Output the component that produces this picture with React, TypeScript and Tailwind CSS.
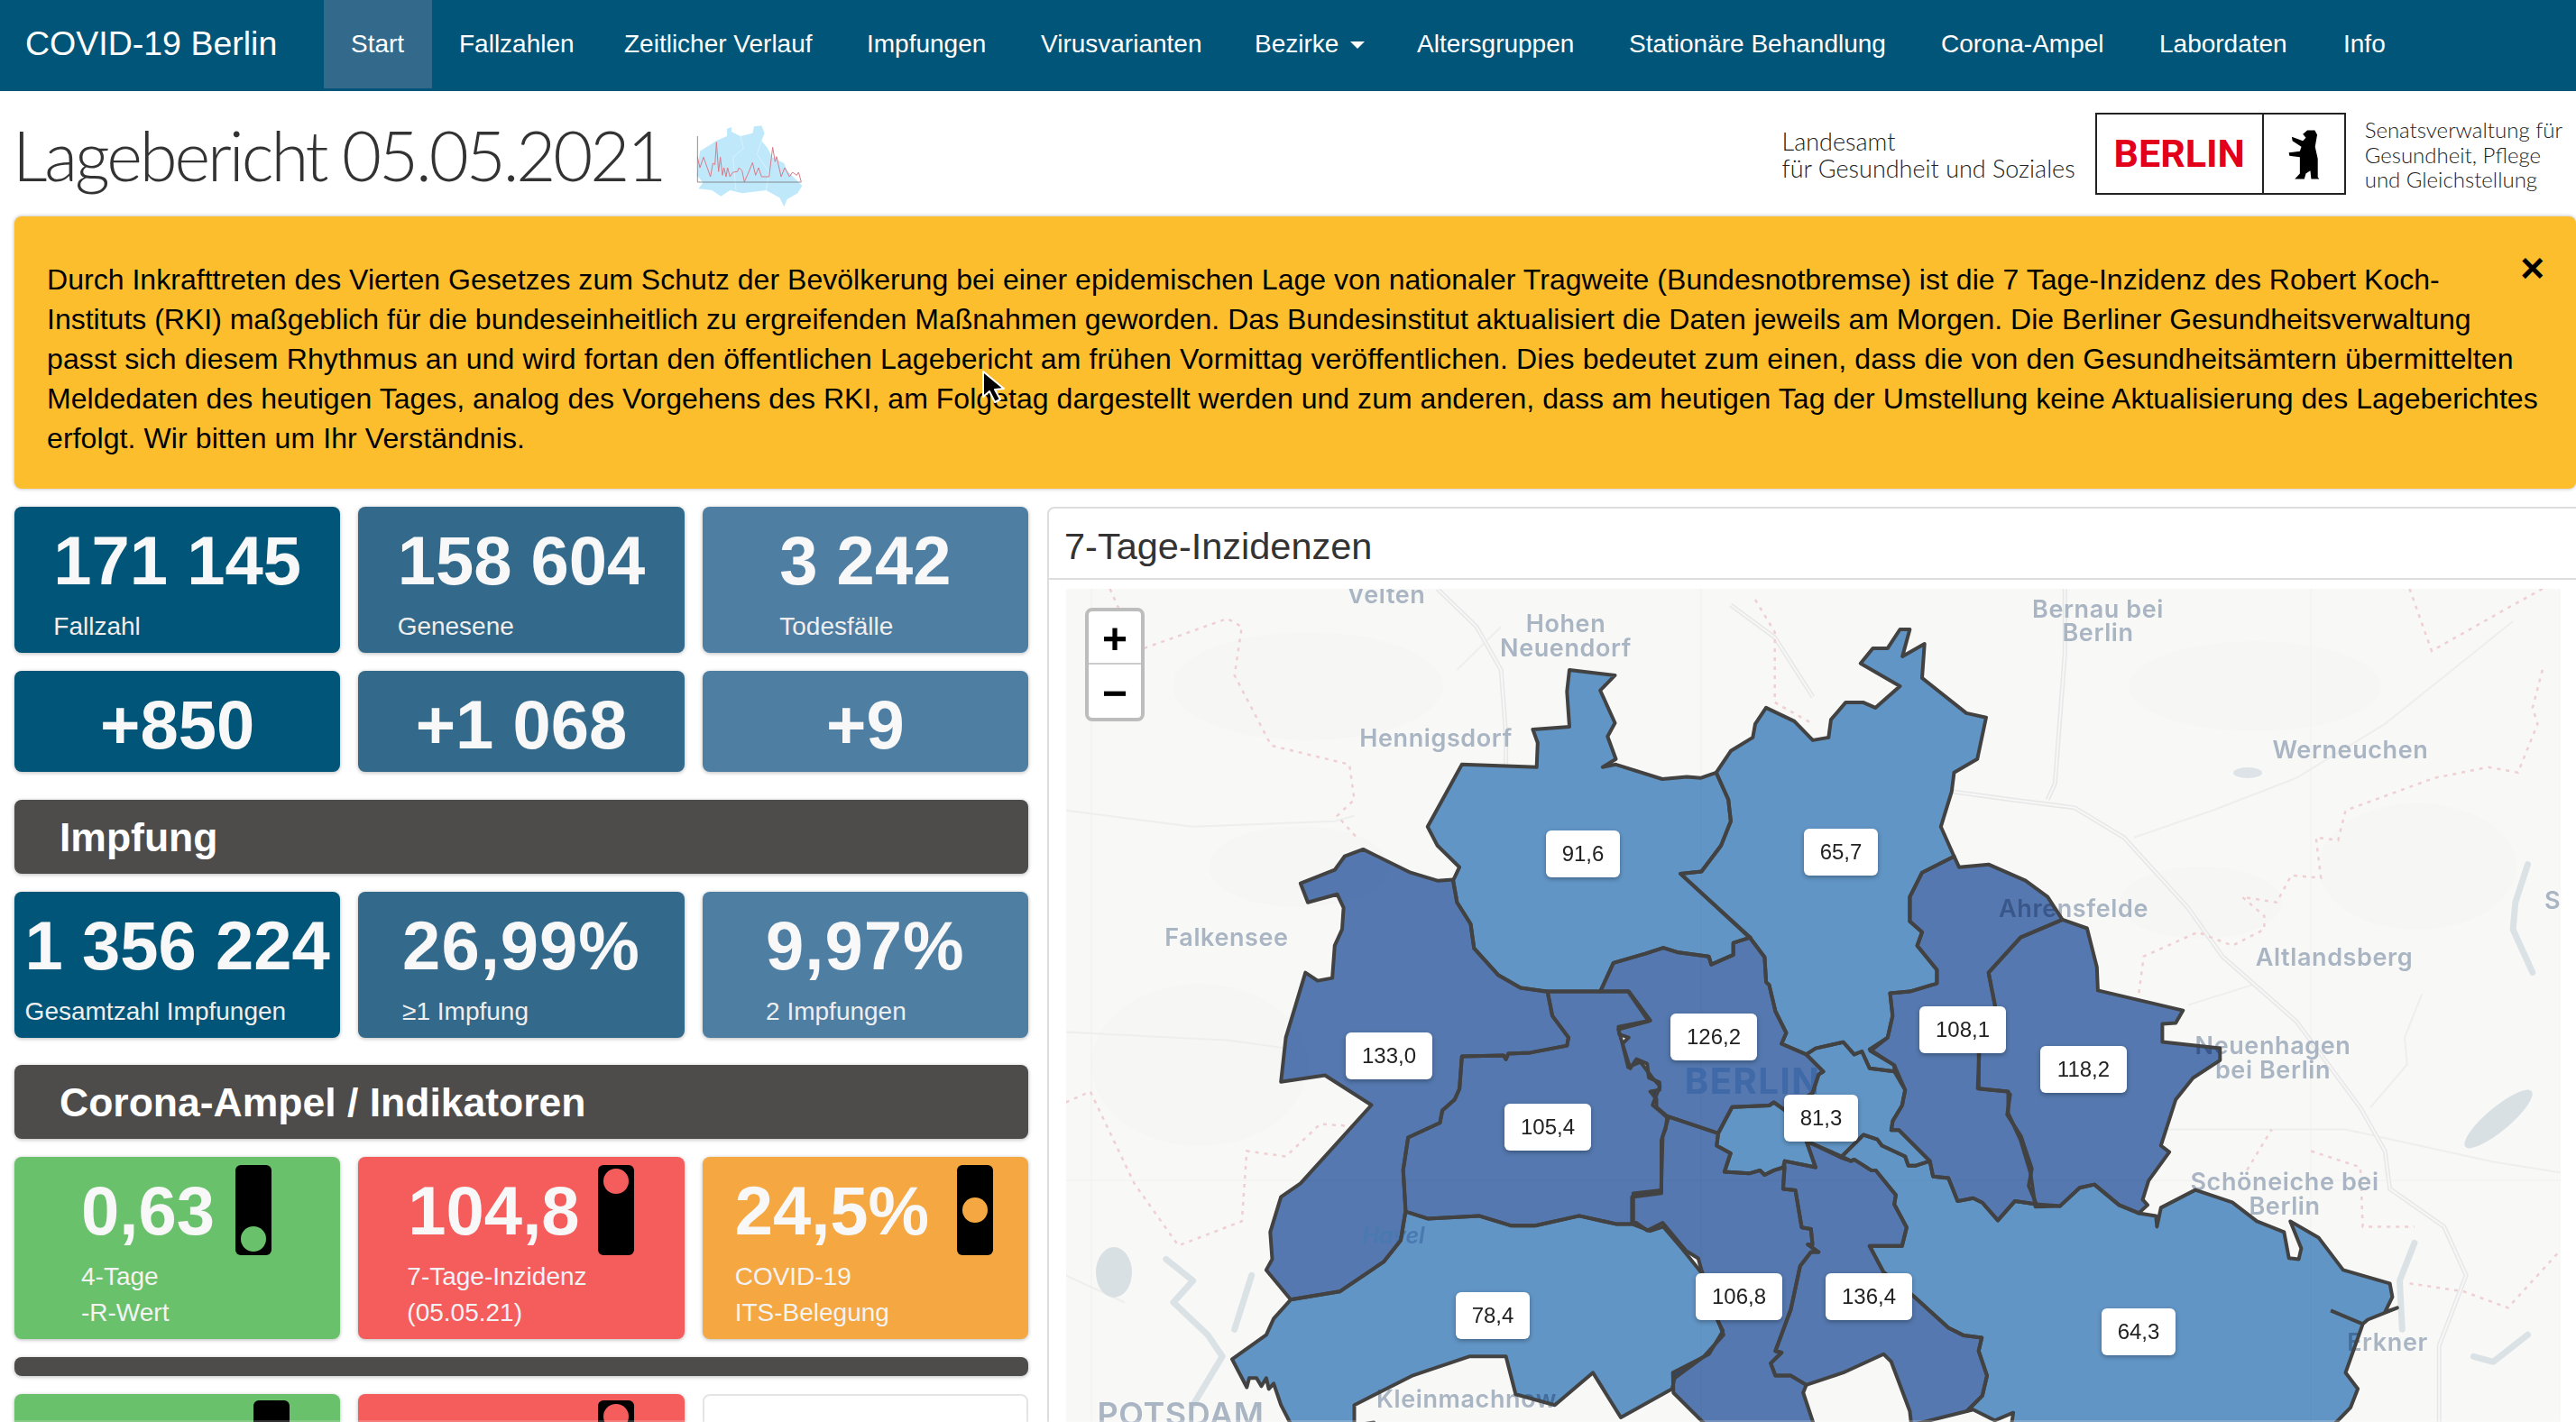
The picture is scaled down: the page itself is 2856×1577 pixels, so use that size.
import React from "react";

const SANS = "font-['Liberation_Sans',Arial,sans-serif]";

const NAV: [string, string][] = [["Start", "w-[120px]"], ["Fallzahlen", "w-[183px]"], ["Zeitlicher Verlauf", "w-[269px]"], ["Impfungen", "w-[193px]"], ["Virusvarianten", "w-[237px]"], ["Bezirke", "w-[180px]"], ["Altersgruppen", "w-[235px]"], ["Stationäre Behandlung", "w-[346px]"], ["Corona-Ampel", "w-[242px]"], ["Labordaten", "w-[204px]"], ["Info", "w-[90px]"]];

const ALERT: [string, string][] = [
  ["Durch Inkrafttreten des Vierten Gesetzes zum Schutz der Bevölkerung bei einer epidemischen Lage von nationaler Tragweite (Bundesnotbremse) ist die 7 Tage-Inzidenz des Robert Koch-", "tracking-[0.03px]"],
  ["Instituts (RKI) maßgeblich für die bundeseinheitlich zu ergreifenden Maßnahmen geworden. Das Bundesinstitut aktualisiert die Daten jeweils am Morgen. Die Berliner Gesundheitsverwaltung", ""],
  ["passt sich diesem Rhythmus an und wird fortan den öffentlichen Lagebericht am frühen Vormittag veröffentlichen. Dies bedeutet zum einen, dass die von den Gesundheitsämtern übermittelten", "tracking-[0.135px]"],
  ["Meldedaten des heutigen Tages, analog des Vorgehens des RKI, am Folgetag dargestellt werden und zum anderen, dass am heutigen Tag der Umstellung keine Aktualisierung des Lageberichtes", "tracking-[0.04px]"],
  ["erfolgt. Wir bitten um Ihr Verständnis.", "tracking-[0.09px]"],
];

type Zone = "a" | "b" | "c";
const ZONES: Record<Zone, [number, number, number, number]> = {
  a: [1160, 640, 0.5421, 0.5995],
  b: [2000, 640, 0.5459, 0.5995],
  c: [1780, 1040, 0.3425, 0.3425],
};
type Seg = [Zone, number[]];
const pts = (segs: Seg[]) =>
  segs
    .flatMap(([z, n]) => {
      const [ox, oy, sx, sy] = ZONES[z];
      const out: string[] = [];
      for (let i = 0; i < n.length; i += 2) out.push(`${(ox + n[i] * sx).toFixed(1)},${(oy + n[i + 1] * sy).toFixed(1)}`);
      return out;
    })
    .join(" ");

const LIGHT = "#6499cc";
const DARK = "#567bb5";

const DISTRICTS: { fill: string; segs: Seg[] }[] = [
  { fill: LIGHT, segs: [["a", [1070,170,1163,180,1133,208,1163,268,1148,293,1165,335,1138,350,1165,345,1260,372,1310,368,1338,370,1370,360,1395,410,1400,450,1380,495,1340,543,1297,547,1440,665,1405,675,1405,697,1360,715,1355,700,1290,692,1262,684,1225,695,1160,712,1133,765,1020,765,970,758,925,735,875,685,868,640,840,600,832,560,845,535,800,495,780,460,850,345,1003,350,1005,305,995,280,1070,275,1065,210]]] },
  { fill: LIGHT, segs: [["a", [1370,360,1400,320,1445,295,1450,270,1472,240,1530,265]], ["b", [18,300,50,295,55,262,85,230,120,230,145,240,195,200,115,158,140,130,170,130,195,95,215,95,200,145,245,122,240,185,330,250,370,258,352,335,305,360,300,395,278,460,305,515,240,545,215,590,215,635,240,655,230,680,270,725,270,750,215,765,175,768,180,810,170,850,135,875]], ["c", [935,410,935,430,855,420,830,365,805,375,770,335,680,355,650,375,570,340,585,305,550,235,530,150,520,140,515,60,470,0]], ["a", [1297,547,1340,543,1380,495,1400,450,1395,410]]] },
  { fill: DARK, segs: [["c", [470,0,515,60,520,140,530,150,550,235,585,305,570,340,650,375,705,430,690,440,670,500,580,555,545,530,530,540,410,545,365,630,200,575,165,545,165,520,145,495,175,490,175,465,140,450,135,405,100,390,80,420,55,340,75,320,45,310,42,285,145,265,75,170]], ["a", [1133,765,1160,712,1225,695,1262,684,1290,692,1355,700,1360,715,1405,697,1405,675,1440,665]]] },
  { fill: DARK, segs: [["a", [648,502,745,545,800,560,832,558,840,600,868,640,875,685,925,735,970,758,1025,765,1035,810,1068,850,1065,865,990,878,945,880,940,890,935,883,850,885,845,945,835,965,810,985,805,1008,740,1035,730,1095,735,1170,725,1225,690,1265,600,1320,500,1335,450,1280,462,1260,458,1210,480,1145,520,1120,665,975,570,920,480,932,490,850,510,790,530,730,555,745,585,740,590,680,605,650,608,610,595,585,535,600,520,565,590,540,610,515]]] },
  { fill: DARK, segs: [["a", [1025,765,1190,765,1232,820,1170,835,1178,860,1190,905,1215,895,1240,925,1255,940,1240,975,1260,990,1272,1000,1258,1040,1258,1138,1198,1145,1198,1195,1165,1195,1090,1180,1000,1198,950,1198,885,1180,780,1185,735,1172,730,1095,740,1035,805,1008,810,985,835,965,845,945,850,885,935,883,940,890,945,880,990,878,1065,865,1068,850,1035,810]]] },
  { fill: DARK, segs: [["c", [200,575,365,630,360,670,405,695,385,755,465,760,500,750,515,765,545,750,580,740,575,810,615,815,635,935,665,940,670,990,655,990,690,1015,665,1015,630,1060,600,1200,550,1335,570,1340,535,1375,550,1415,600,1415,650,1445,640,1470,680,1590,340,1590,220,1470,218,1405,335,1345,380,1270,360,1230,310,1070,300,1035,260,1010,185,920,135,945,100,920,90,920,90,825,180,815,185,640,195,615]]] },
  { fill: LIGHT, segs: [["a", [735,1172,780,1185,885,1180,950,1198,1000,1198,1090,1180,1165,1195,1198,1195,1235,1208,1262,1200,1300,1240,1340,1285,1355,1330,1385,1400,1345,1440,1285,1480,1280,1500,1175,1553,1118,1470,1040,1530,960,1510,940,1440,865,1440,750,1475,630,1530,630,1568,670,1562,680,1600,520,1600,480,1530,465,1490,455,1500,450,1480,440,1495,430,1480,415,1480,410,1497,380,1445,450,1400,465,1370,500,1335,600,1320,690,1265,725,1225]]] },
  { fill: LIGHT, segs: [["c", [650,375,680,355,770,335,805,375,830,365,855,420,935,430,970,490,960,540,930,590,925,620,950,620,1050,720,1005,735,980,735,970,705,895,670,880,650,835,635,765,705,650,655,680,740,580,720,575,740,545,750,515,765,500,750,465,760,385,755,405,695,360,670,365,630,410,545,530,540,545,530,580,555,670,500,690,440,705,430]]] },
  { fill: DARK, segs: [["c", [650,655,765,710,795,720,805,715,860,750,875,750,940,830,935,860,975,935,960,995,855,995,900,1080,1000,1160,1110,1260,1160,1285,1218,1292,1208,1335,1235,1415,1220,1480,1170,1530,990,1575,985,1530,925,1370,900,1345,770,1405,650,1445,600,1415,550,1415,535,1375,570,1340,550,1335,600,1200,630,1060,665,1015,690,1015,655,990,670,990,665,940,635,935,615,815,575,810,580,720,680,740]]] },
  { fill: DARK, segs: [["b", [305,515,315,535,375,530,450,560,495,590,525,632,440,665,375,730,390,800]], ["c", [1210,370,1205,485,1300,495,1310,505,1300,570,1345,640,1380,745,1370,800,1395,860,1325,850,1270,912,1220,855,1190,840,1140,850,1110,775,1060,770,1050,720,950,620,925,620,930,590,960,540,970,490,935,410,855,358]], ["b", [170,850,180,810,175,768,215,765,270,750,270,725,230,680,240,655,215,635,215,590,240,545]]] },
  { fill: DARK, segs: [["b", [525,632,575,648,595,720,597,763,770,800,755,823,728,825,728,858,845,870,845,892,790,925,755,965,725,1050,742,1062,700,1115,688,1150,698,1160,680,1175,640,1160,590,1122,560,1128,520,1162,470,1163,460,1100,440,1040,415,990,415,950,355,945,355,880,390,800,375,730,440,665]]] },
  { fill: LIGHT, segs: [["c", [765,705,835,635,880,650,895,670,970,705,980,735,1005,735,1050,720,1060,770,1110,775,1140,850,1190,840,1220,855,1270,912,1325,850,1395,860]], ["b", [520,1162,560,1128,590,1122,640,1160,680,1175,715,1180,717,1200,725,1165,795,1132,870,1155,920,1190,975,1210,985,1258,1005,1260,1010,1240,988,1190,1045,1220,1095,1280,1190,1305,1195,1330,1180,1358,1205,1350,1145,1372,1135,1380,1100,1470,1125,1500,1110,1535,1040,1600]], ["c", [1310,1600,1320,1535,1260,1560,1190,1525,1170,1530,1220,1480,1235,1415,1208,1335,1218,1292,1160,1285,1110,1260,1000,1160,900,1080,855,995,960,995,975,935,935,860,940,830,875,750,860,750,805,715,795,720]]] },
];

const EXTRA_LINE: Seg[] = [["b", [1070,1355,1135,1380]]];

const ROADS: Seg[][] = [
  [["b", [300,395,420,410,550,425,650,480,780,610,850,700,1000,820,1130,980,1180,1060,1190,1130,1300,1200,1345,1290,1290,1420,1290,1570]]],
  [["a", [800,20,880,90,930,170,940,290,940,350]]],
  [["a", [1400,50,1490,110,1568,220]]],
  [["b", [530,20,530,140,510,380,495,410]]],
];
const MINOR: Seg[][] = [
  [["a", [840,170,930,90]]],
  [["a", [40,430,300,460,590,450,630,440]]],
  [["a", [40,840,370,855,490,870]]],
  [["a", [40,1290,160,1340]]],
  [["b", [670,480,830,430,1000,370,1180,270,1440,80]]],
  [["b", [730,1020,1100,1020,1400,1080,1538,1100]]],
  [["b", [780,790,920,750]]],
  [["b", [1255,770,1220,850,1225,900,1150,980]]],
];
const BORDERS: Seg[][] = [
  [["a", [200,130,370,75,400,90,385,180,460,310,620,345,630,410,595,440,640,485]]],
  [["a", [40,970,90,950,180,1120,270,1235,400,1190,410,1060,490,1070,560,1010,640,1015]]],
  [["a", [130,20,150,60]]],
  [["a", [1450,40,1490,100,1490,230,1568,270]]],
  [["b", [1230,20,1275,135,1440,50,1500,20]]],
  [["b", [1500,170,1480,240,1490,270,1450,360,1390,350,1280,370,1100,430,1085,485,1040,480,1050,555,990,550,960,600,890,590,935,625,935,650,870,680,800,655,690,700,680,770]]],
  [["b", [900,1095,950,1020]]],
  [["b", [1030,1060,1130,1090,1135,1200,1240,1200]]],
  [["b", [1230,1305,1340,1320,1430,1350,1530,1250]]],
];
const WATER: Seg[][] = [
  [["a", [245,1260,300,1300,260,1340,330,1400,360,1440,300,1530]]],
  [["a", [420,1290,385,1390]]],
  [["b", [1470,530,1445,600,1440,650,1480,730]]],
  [["b", [1240,1230,1210,1300,1215,1390]]],
  [["b", [1360,1440,1400,1450,1470,1400]]],
];

const PLACES: [string, number, number, number?][] = [
  ["Velten", 1537, 668], ["Hohen", 1736, 700], ["Neuendorf", 1736, 727], ["Hennigsdorf", 1592, 827], ["Falkensee", 1360, 1048],
  ["POTSDAM", 1309, 1580, 36], ["Kleinmachnow", 1626, 1560], ["Ahrensfelde", 2299, 1016], ["Bernau bei", 2326, 684], ["Berlin", 2326, 710],
  ["Werneuchen", 2606, 840], ["Altlandsberg", 2588, 1070], ["Neuenhagen", 2520, 1168], ["bei Berlin", 2520, 1195], ["Schöneiche bei", 2533, 1319],
  ["Berlin", 2533, 1346], ["Erkner", 2647, 1497], ["S", 2830, 1007],
];

const LABELS: [string, number, number, number][] = [
  ["91,6", 1714, 921, 82], ["65,7", 2000, 919, 82], ["133,0", 1492, 1145, 96], ["126,2", 1852, 1124, 96], ["105,4", 1668, 1224, 96], ["81,3", 1978, 1214, 82],
  ["108,1", 2128, 1116, 96], ["118,2", 2262, 1160, 96], ["78,4", 1614, 1433, 82], ["106,8", 1880, 1412, 96], ["136,4", 2024, 1412, 96], ["64,3", 2330, 1451, 82],
];

const BlueCard = ({ bg, value, label }: { bg: string; value: string; label?: string }) => (
  <div className={`${bg} flex justify-center rounded-lg shadow-[0_1px_4px_rgba(0,0,0,0.28)] ${label ? "h-[162px]" : "h-[112px]"} pt-[18px]`}>
    <div>
      <div className={`h-[84px] text-center text-[76px] font-bold leading-[84px] whitespace-nowrap text-[#f8f8f8] ${value.includes("%") ? "tracking-[1px]" : ""}`}>{value}</div>
      {label && <div className="mt-[11px] text-[28px] leading-[40px] whitespace-nowrap text-[#eeeeee]">{label}</div>}
    </div>
  </div>
);

const Bar = ({ children }: { children?: React.ReactNode }) => (
  <div className="flex h-[82px] items-center rounded-lg bg-[#4d4c4b] pl-[50px] pt-[2px] text-[44.5px] font-bold text-white shadow-[0_1px_4px_rgba(0,0,0,0.28)]">{children}</div>
);

const Light = ({ pos, color, className }: { pos: "top" | "mid" | "bottom"; color: string; className: string }) => (
  <div className={`flex h-[100px] w-[40px] shrink-0 flex-col items-center rounded-md bg-black ${pos === "top" ? "justify-start pt-[4px]" : pos === "mid" ? "justify-center" : "justify-end pb-[4px]"} ${className}`}>
    <div className={`h-[28px] w-[28px] rounded-full ${color}`} />
  </div>
);

type AmpelProps = { bg: string; dot: string; pos: "top" | "mid" | "bottom"; value: string; l1?: string; l2?: string; pad: string; col: string; lab?: string; num?: string; top?: string; lt?: string };
const AmpelCard = ({ bg, dot, pos, value, l1, l2, pad, col, lab = "", num = "", top = "pt-[18px]", lt = "mt-[9px]" }: AmpelProps) => (
  <div className={`${bg} flex h-[202px] rounded-lg shadow-[0_1px_4px_rgba(0,0,0,0.28)] ${pad}`}>
    <div className={`${col} shrink-0 ${top}`}>
      <div className={`h-[84px] text-[76px] font-bold leading-[84px] whitespace-nowrap text-[#f8f8f8] ${num}`}>{value}</div>
      {l1 && (
        <div className={`mt-[11px] text-[28px] leading-[40px] whitespace-nowrap text-[#f3f3f3] ${lab}`}>
          <div>{l1}</div>
          <div>{l2}</div>
        </div>
      )}
    </div>
    <Light pos={pos} color={dot} className={lt} />
  </div>
);

const Bear = () => (
  <svg viewBox="100 95 115 180" className="h-[60px] w-[38px]">
    <path fill="#000" d="M170 105 L195 105 L203 120 L196 160 L205 200 L205 262 L210 268 L183 268 L180 240 L165 250 L160 268 L128 268 L145 250 L145 195 L110 190 L108 180 L145 175 L150 160 L120 140 L118 127 L155 140 L165 130 L155 118 Z" />
  </svg>
);

const Sparkmap = () => (
  <svg viewBox="0 0 450 330" className="h-[110px] w-[150px] shrink-0">
    <polygon fill="#bfe9fb" points="150,35 165,30 165,45 195,60 235,50 240,28 265,25 275,50 265,75 285,100 300,130 340,150 350,175 400,225 385,250 350,270 340,295 325,265 280,240 200,250 160,240 130,260 100,240 55,235 70,215 50,190 60,110 100,85 115,75 150,60" />
    <polyline fill="none" stroke="#e4f6fd" strokeWidth="2" points="195,60 205,100 170,130 180,240" />
    <polyline fill="none" stroke="#e4f6fd" strokeWidth="2" points="265,75 250,120 290,180 280,240" />
    <polyline fill="none" stroke="#d97a88" strokeWidth="3" points="52,130 60,165 72,130 95,195 103,150 110,155 115,80 122,178 128,130 135,190 140,165 147,195 152,165 160,195 170,180 185,178 190,165 200,175 208,212 222,180 235,148 245,190 255,165 265,195 290,195 302,97 310,145 315,128 330,195 342,165 358,195 368,180 382,190 388,180 397,212" />
    <polyline fill="none" stroke="#777" strokeWidth="2.5" points="52,60 52,213 397,213" />
  </svg>
);

const BerlinMap = () => (
  <div className="relative isolate h-[925px] w-[1657px] overflow-hidden bg-[#f8f8f7]">
    <svg viewBox="1182 652 1657 925" className="absolute inset-0 h-[925px] w-[1657px]">
      <g className="blur-[0.7px]">
        <ellipse cx="1450" cy="760" rx="150" ry="60" fill="#f6f6f5" />
        <ellipse cx="1330" cy="1180" rx="120" ry="90" fill="#f6f6f5" />
        <ellipse cx="1440" cy="960" rx="100" ry="45" fill="#f6f7f5" />
        <ellipse cx="2500" cy="760" rx="140" ry="50" fill="#f6f7f5" />
        <ellipse cx="2680" cy="960" rx="110" ry="70" fill="#f6f7f5" />
        <ellipse cx="2440" cy="1000" rx="90" ry="40" fill="#f6f7f5" />
        <path d="M1210 652V1577M1886 652V1577M2562 652V1577M1182 1308H2839" stroke="#f0f0f0" strokeWidth="1" fill="none" />
        {MINOR.map((s, i) => <polyline key={i} points={pts(s)} fill="none" stroke="#eeeeee" strokeWidth="2" />)}
        {ROADS.map((s, i) => <polyline key={i} points={pts(s)} fill="none" stroke="#e7e7e7" strokeWidth="5" />)}
        {ROADS.map((s, i) => <polyline key={i} points={pts(s)} fill="none" stroke="#f7f7f7" strokeWidth="2" />)}
        {BORDERS.map((s, i) => <polyline key={i} points={pts(s)} fill="none" stroke="#efcfd1" strokeWidth="2.5" strokeDasharray="4 6" />)}
        {WATER.map((s, i) => <polyline key={i} points={pts(s)} fill="none" stroke="#dbe2e6" strokeWidth="7" strokeLinecap="round" strokeLinejoin="round" />)}
        <ellipse cx="1235" cy="1410" rx="20" ry="28" fill="#d9e0e4" />
        <ellipse cx="2770" cy="1240" rx="48" ry="13" transform="rotate(-40 2770 1240)" fill="#d9e0e4" />
        <ellipse cx="2492" cy="856" rx="16" ry="6" fill="#dde3e7" />
        {PLACES.map(([t, x, y, s], i) => (
          <text key={i} x={x} y={y} textAnchor="middle" fontSize={s ?? 27} fontWeight={600} letterSpacing="0.6" fill="#a9b5c3" fontFamily="Inter, 'Liberation Sans', sans-serif">{t}</text>
        ))}
      </g>
      {DISTRICTS.map((d, i) => <polygon key={i} points={pts(d.segs)} fill={d.fill} className="mix-blend-multiply" />)}
      <text x="1943" y="1212" textAnchor="middle" fontSize="40" fontWeight={700} letterSpacing="1.5" fill="#4069a8" fontFamily="Inter, 'Liberation Sans', sans-serif">BERLIN</text>
      <text x="1545" y="1378" textAnchor="middle" fontSize="25" fontStyle="italic" fontWeight={600} fill="#4a78b0" fontFamily="Inter, 'Liberation Sans', sans-serif">Havel</text>
      {DISTRICTS.map((d, i) => <polygon key={i} points={pts(d.segs)} fill="none" stroke="#424242" strokeWidth="4" strokeLinejoin="round" />)}
      <polyline points={pts(EXTRA_LINE)} fill="none" stroke="#424242" strokeWidth="4" />
    </svg>
    {LABELS.map(([t, x, y, w]) => (
      <div key={t} className="absolute flex h-[52px] items-center justify-center rounded-md bg-white text-[24px] text-[#222222] shadow-[0_2px_5px_rgba(0,0,0,0.3)]" style={{ left: x - 1182, top: y - 653, width: w }}>
        {t}
      </div>
    ))}
    <div className="absolute left-[21px] top-[21px] flex h-[126px] w-[66px] flex-col overflow-hidden rounded-lg border-4 border-[#bdbdbd] bg-white text-black">
      <div className="flex h-[59px] items-center justify-center border-b-2 border-[#cccccc] pt-[4px] text-[48px] font-bold leading-none">+</div>
      <div className="flex flex-1 items-center justify-center pt-[5px] text-[48px] font-bold leading-none">−</div>
    </div>
  </div>
);

export default function App() {
  return (
    <div className={`relative h-[1577px] w-[2856px] overflow-hidden bg-white text-[#333333] ${SANS}`}>
      <nav className="flex h-[101px] bg-[#005578] text-white">
        <div className="ml-[28px] mr-[52px] flex h-[98px] w-[279px] items-center text-[37.5px] leading-none whitespace-nowrap">COVID-19 Berlin</div>
        {NAV.map(([n, w], i) => (
          <div key={n} className={`flex h-[98px] shrink-0 items-center pl-[30px] text-[28px] whitespace-nowrap ${w} ${i === 0 ? "bg-[#33698a]" : ""}`}>
            {n}
            {n === "Bezirke" && <span className="ml-[13px] mt-[2px] h-0 w-0 border-x-[8px] border-t-[8px] border-x-transparent border-t-white" />}
          </div>
        ))}
      </nav>

      <header className="flex h-[139px] items-center pl-[14px]">
        <h1 className="mt-[3px] font-['Lato',sans-serif] text-[76px] font-light leading-none tracking-[-3.1px] whitespace-nowrap text-[#333333]">Lagebericht 05.05.2021</h1>
        <div className="ml-[20px] mt-[30px]"><Sparkmap /></div>
        <div className="ml-auto flex items-center pr-[15px]">
          <div className="mt-[3px] font-['Lato',sans-serif] text-[27px] font-light leading-[30px] whitespace-nowrap text-[#222222]">
            <div>Landesamt</div>
            <div>für Gesundheit und Soziales</div>
          </div>
          <div className="ml-[22px] flex h-[91px] w-[278px] border-2 border-[#222222]">
            <div className="flex w-[185px] items-center justify-center border-r-2 border-[#222222] font-['Roboto',sans-serif] text-[43px] font-bold text-[#e2001a]">BERLIN</div>
            <div className="flex flex-1 items-center justify-center"><Bear /></div>
          </div>
          <div className="ml-[21px] mt-[2px] font-['Lato',sans-serif] text-[24px] font-light leading-[27.5px] whitespace-nowrap text-[#222222]">
            <div>Senatsverwaltung für</div>
            <div>Gesundheit, Pflege</div>
            <div>und Gleichstellung</div>
          </div>
        </div>
      </header>

      <div className="relative ml-[16px] h-[302px] rounded-lg bg-[#fdbe2d] pl-[36px] pt-[48px] text-[32px] leading-[44px] text-black shadow-[0_0_4px_rgba(0,0,0,0.3)]">
        {ALERT.map(([l, t]) => <div key={l} className={`whitespace-nowrap ${t}`}>{l}</div>)}
        <div className="absolute right-[35px] top-[34px] text-[46px] font-bold leading-[46px]">×</div>
      </div>

      <div className="mt-[20px] flex gap-[21px] pl-[16px]">
        <div className="flex w-[1124px] shrink-0 flex-col gap-[20px]">
          <div className="grid grid-cols-3 gap-[20px]">
            <BlueCard bg="bg-[#005578]" value="171 145" label="Fallzahl" />
            <BlueCard bg="bg-[#33698a]" value="158 604" label="Genesene" />
            <BlueCard bg="bg-[#4f7ea3]" value="3 242" label="Todesfälle" />
            <BlueCard bg="bg-[#005578]" value="+850" />
            <BlueCard bg="bg-[#33698a]" value="+1 068" />
            <BlueCard bg="bg-[#4f7ea3]" value="+9" />
          </div>
          <div className="mt-[11px]"><Bar>Impfung</Bar></div>
          <div className="grid grid-cols-3 gap-[20px]">
            <BlueCard bg="bg-[#005578]" value="1 356 224" label="Gesamtzahl Impfungen" />
            <BlueCard bg="bg-[#33698a]" value="26,99%" label="≥1 Impfung" />
            <BlueCard bg="bg-[#4f7ea3]" value="9,97%" label="2 Impfungen" />
          </div>
          <div className="mt-[10px]"><Bar>Corona-Ampel / Indikatoren</Bar></div>
          <div className="grid grid-cols-3 gap-[20px]">
            <AmpelCard bg="bg-[#6ac16b]" dot="bg-[#6ac16b]" pos="bottom" value="0,63" l1="4-Tage" l2="-R-Wert" pad="pl-[72px]" col="w-[173px]" lab="ml-[2px]" num="ml-[2px]" />
            <AmpelCard bg="bg-[#f55d5d]" dot="bg-[#f55d5d]" pos="top" value="104,8" l1="7-Tage-Inzidenz" l2="(05.05.21)" pad="pl-[50px]" col="w-[216px]" lab="ml-[4px]" num="ml-[5px]" />
            <AmpelCard bg="bg-[#f5a742]" dot="bg-[#f5a742]" pos="mid" value="24,5%" l1="COVID-19" l2="ITS-Belegung" pad="pl-[36px]" col="w-[246px]" />
          </div>
          <div className="h-[21px] rounded-lg bg-[#4d4c4b] shadow-[0_1px_4px_rgba(0,0,0,0.28)]" />
          <div className="grid grid-cols-3 gap-[20px]">
            <AmpelCard bg="bg-[#6ac16b]" dot="bg-[#6ac16b]" pos="bottom" value="0,13" pad="pl-[92px]" col="w-[173px]" top="pt-[16px]" lt="mt-[7px]" />
            <AmpelCard bg="bg-[#f55d5d]" dot="bg-[#f55d5d]" pos="top" value="10,8" pad="pl-[50px]" col="w-[216px]" top="pt-[16px]" lt="mt-[7px]" />
            <div className="flex h-[202px] justify-center rounded-lg border-2 border-[#e4e4e4] bg-white pt-[14px] text-[76px] font-bold leading-[84px] text-[#4f7ea3]">1 111</div>
          </div>
        </div>

        <section className="h-[1100px] w-[1720px] shrink-0 rounded-lg border-2 border-[#dddddd] bg-white">
          <div className="flex h-[79px] items-center border-b-2 border-[#dddddd] pl-[17px] pt-[8px] text-[41.5px] text-[#333333]">7-Tage-Inzidenzen</div>
          <div className="pl-[19px] pt-[10px]"><BerlinMap /></div>
        </section>
      </div>

      <svg viewBox="0 0 40 50" className="absolute left-[1087px] top-[410px] h-[50px] w-[40px]">
        <path d="M3 2 L3 30 L10 24 L16 36 L22 33 L16 22 L26 21 Z" fill="#000" stroke="#fff" strokeWidth="2" strokeLinejoin="round" />
      </svg>
      <div className="absolute inset-x-0 bottom-0 h-[2px] bg-white/20" />
    </div>
  );
}
